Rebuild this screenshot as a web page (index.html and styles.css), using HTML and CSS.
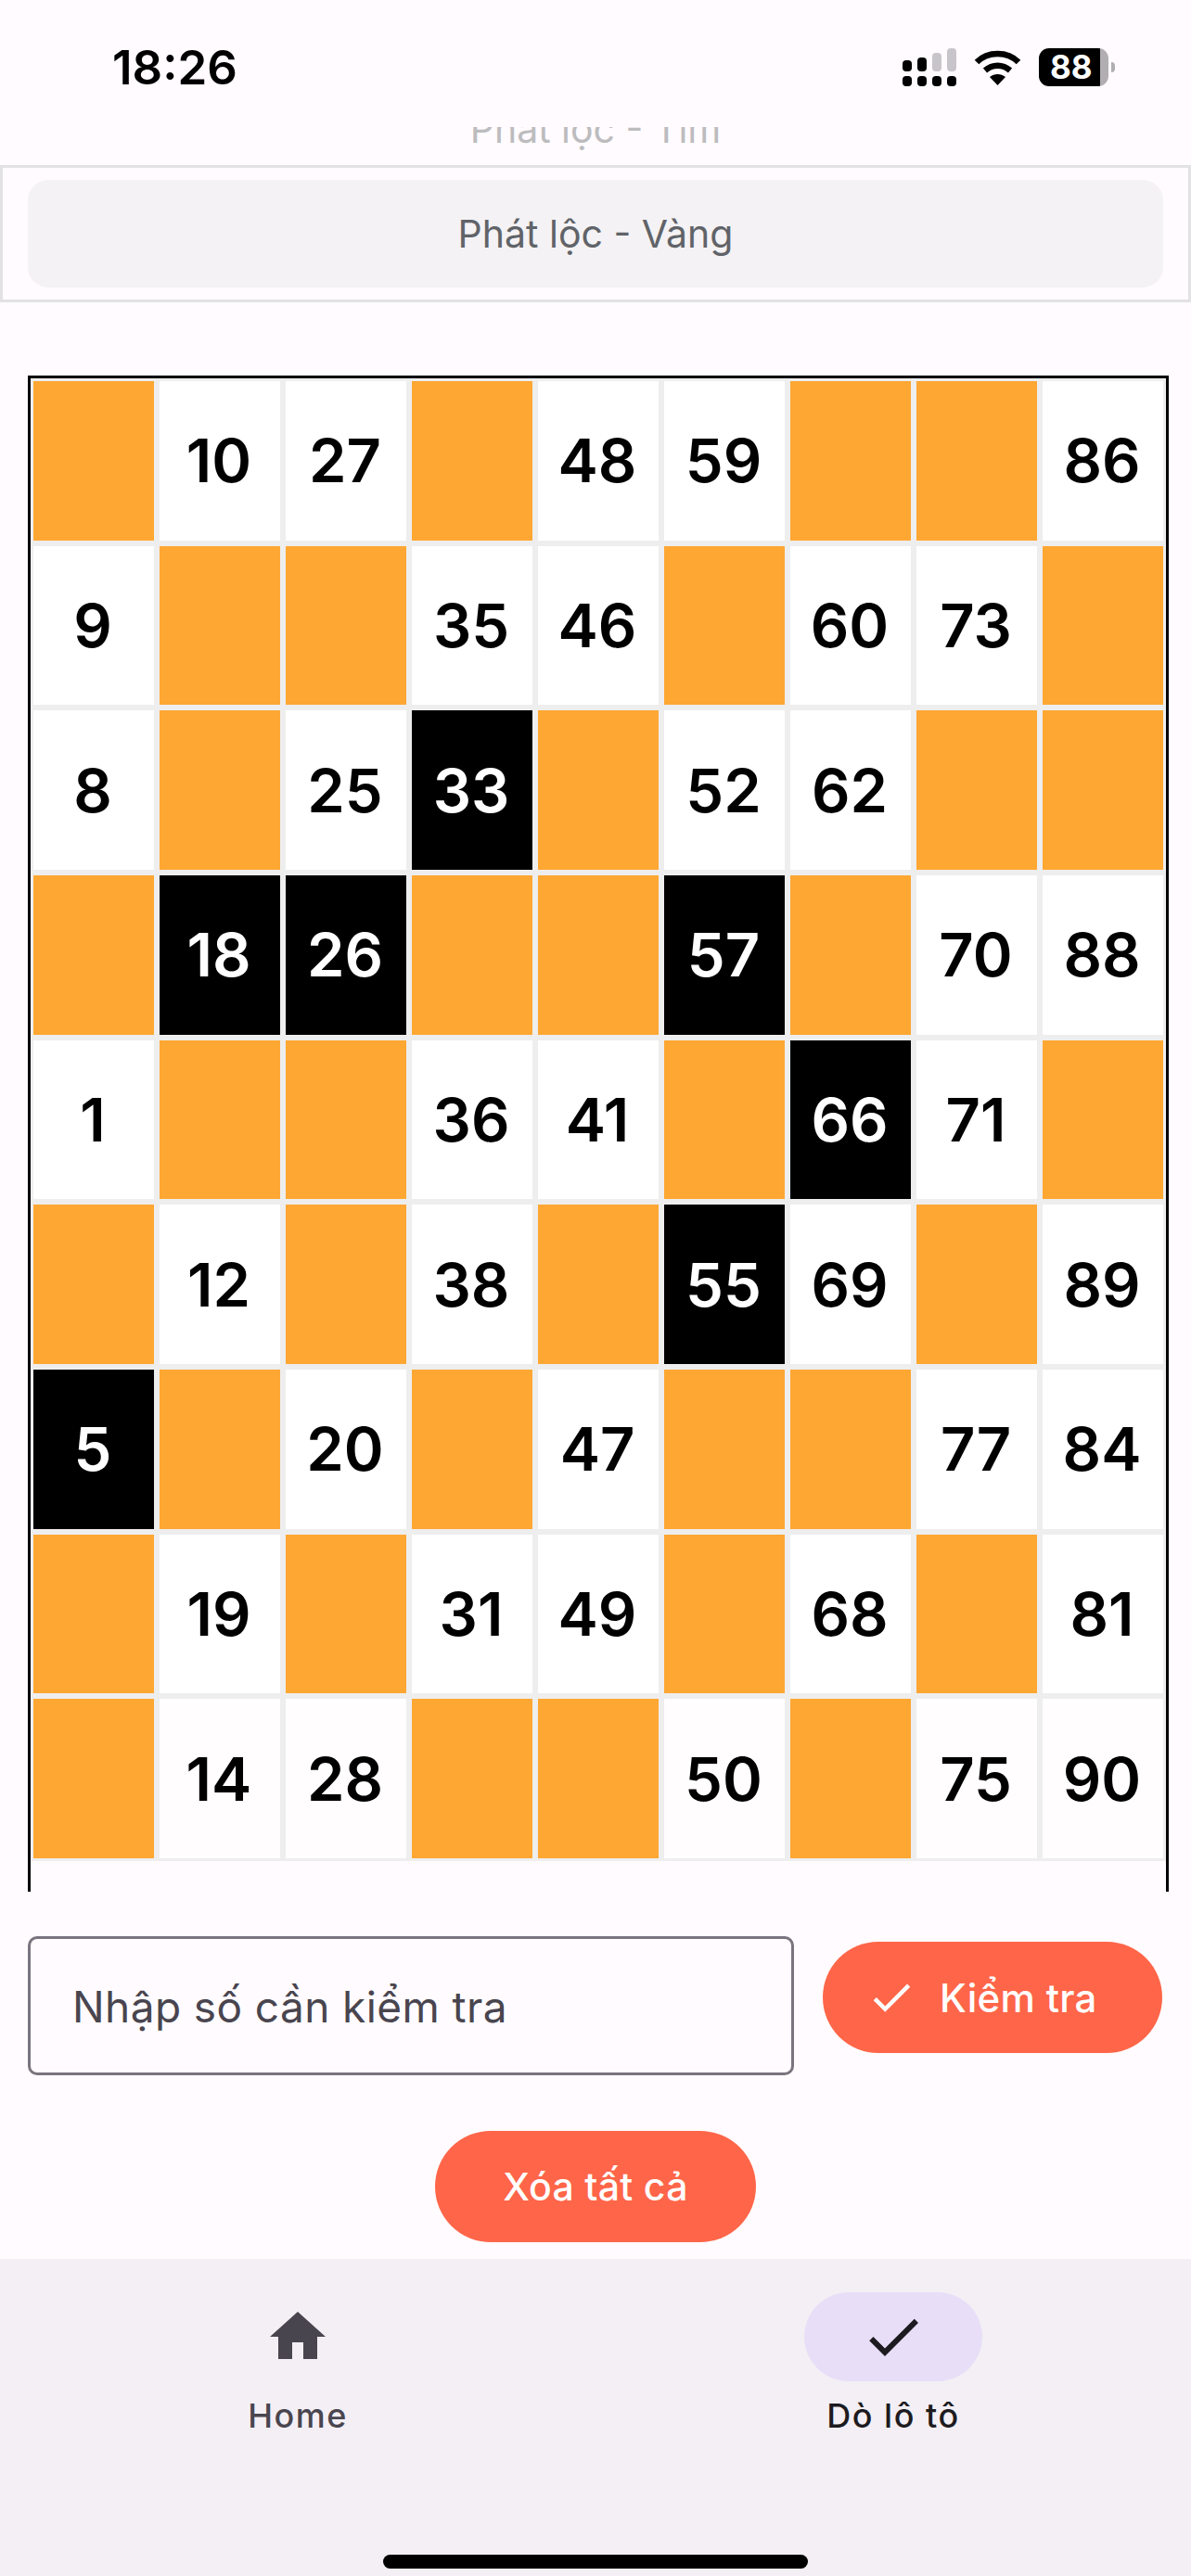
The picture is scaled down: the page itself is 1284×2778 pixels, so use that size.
FILE: index.html
```html
<!DOCTYPE html>
<html lang="en">

<head>
    <meta charset="UTF-8">
    <meta name="viewport" content="width=device-width, initial-scale=1.0">
    <title>Dò lô tô</title>
    <link rel="stylesheet" href="styles.css">
</head>

<body>
    <header class="status-bar">
        <span class="status-time">18:26</span>
        <div class="status-icons">
            <svg class="icon-signal" width="58" height="41" viewBox="0 0 58 41">
                <rect x="0" y="13" width="10" height="12" rx="4" fill="#000" />
                <rect x="16" y="10" width="10" height="15" rx="4" fill="#000" />
                <rect x="32" y="5" width="10" height="20" rx="4" fill="#c8c5ca" />
                <rect x="48" y="0" width="10" height="25" rx="4" fill="#c8c5ca" />
                <rect x="0" y="30" width="10" height="11" rx="4" fill="#000" />
                <rect x="16" y="30" width="10" height="11" rx="4" fill="#000" />
                <rect x="32" y="30" width="10" height="11" rx="4" fill="#000" />
                <rect x="48" y="30" width="10" height="11" rx="4" fill="#000" />
            </svg>
            <svg class="icon-wifi" width="51" height="38" viewBox="0 0 51 38">
                <path d="M3 13C15 1 36 1 48 13" fill="none" stroke="#000" stroke-width="6.5" />
                <path d="M12 22C20 15 31 15 39 22" fill="none" stroke="#000" stroke-width="6.5" />
                <path d="M25.5 38L17 29C22 25 29 25 34 29Z" fill="#000" />
            </svg>
            <div class="battery">
                <span class="battery-body">88</span>
                <span class="battery-tip"></span>
            </div>
        </div>
    </header>

    <div class="dropdown-peek"><span>Phát lộc - Tím</span></div>
    <div class="dropdown-item">
        <div class="dropdown-pill">Phát lộc - Vàng</div>
    </div>

    <div class="board">
        <div class="board-grid">
            <div class="cell on"></div><div class="cell">10</div><div class="cell">27</div><div class="cell on"></div><div class="cell">48</div><div class="cell">59</div><div class="cell on"></div><div class="cell on"></div><div class="cell">86</div>
            <div class="cell">9</div><div class="cell on"></div><div class="cell on"></div><div class="cell">35</div><div class="cell">46</div><div class="cell on"></div><div class="cell">60</div><div class="cell">73</div><div class="cell on"></div>
            <div class="cell">8</div><div class="cell on"></div><div class="cell">25</div><div class="cell hit">33</div><div class="cell on"></div><div class="cell">52</div><div class="cell">62</div><div class="cell on"></div><div class="cell on"></div>
            <div class="cell on"></div><div class="cell hit">18</div><div class="cell hit">26</div><div class="cell on"></div><div class="cell on"></div><div class="cell hit">57</div><div class="cell on"></div><div class="cell">70</div><div class="cell">88</div>
            <div class="cell">1</div><div class="cell on"></div><div class="cell on"></div><div class="cell">36</div><div class="cell">41</div><div class="cell on"></div><div class="cell hit">66</div><div class="cell">71</div><div class="cell on"></div>
            <div class="cell on"></div><div class="cell">12</div><div class="cell on"></div><div class="cell">38</div><div class="cell on"></div><div class="cell hit">55</div><div class="cell">69</div><div class="cell on"></div><div class="cell">89</div>
            <div class="cell hit">5</div><div class="cell on"></div><div class="cell">20</div><div class="cell on"></div><div class="cell">47</div><div class="cell on"></div><div class="cell on"></div><div class="cell">77</div><div class="cell">84</div>
            <div class="cell on"></div><div class="cell">19</div><div class="cell on"></div><div class="cell">31</div><div class="cell">49</div><div class="cell on"></div><div class="cell">68</div><div class="cell on"></div><div class="cell">81</div>
            <div class="cell on"></div><div class="cell">14</div><div class="cell">28</div><div class="cell on"></div><div class="cell on"></div><div class="cell">50</div><div class="cell on"></div><div class="cell">75</div><div class="cell">90</div>
        </div>
    </div>

    <form class="check-row">
        <input class="check-input" type="text" placeholder="Nhập số cần kiểm tra">
        <button class="btn btn-check" type="button">
            <svg width="54" height="54" viewBox="0 0 24 24"><path d="M9 16.17L4.83 12l-1.42 1.41L9 19 21 7l-1.41-1.41z" fill="#fff" /></svg>
            Kiểm tra
        </button>
    </form>

    <div class="clear-row">
        <button class="btn btn-clear" type="button">Xóa tất cả</button>
    </div>

    <nav class="bottom-nav">
        <div class="nav-items">
            <a class="nav-item">
                <span class="nav-pill">
                    <svg width="72" height="72" viewBox="0 0 24 24"><path d="M10 20v-6h4v6h5v-8h3L12 3 2 12h3v8z" fill="#49454f" /></svg>
                </span>
                <span class="nav-label">Home</span>
            </a>
            <a class="nav-item active">
                <span class="nav-pill">
                    <svg width="72" height="72" viewBox="0 0 24 24"><path d="M9 16.17L4.83 12l-1.42 1.41L9 19 21 7l-1.41-1.41z" fill="#1d1b20" /></svg>
                </span>
                <span class="nav-label">Dò lô tô</span>
            </a>
        </div>
        <div class="home-bar"></div>
    </nav>
</body>

</html>
```

FILE: styles.css
```css
body {
    font-family: Inter, "Noto Sans", sans-serif;
    background-color: #fffbfe;
    margin: 0;
    width: 1284px;
    height: 2778px;
    overflow: hidden;
    display: flex;
    flex-direction: column;
}

.status-bar {
    height: 137px;
    box-sizing: border-box;
    padding: 52px 82px 0 121px;
    display: flex;
    justify-content: space-between;
    align-items: flex-start;
}

.status-time {
    font-size: 51px;
    line-height: 41px;
    font-weight: 600;
    color: #000;
}

.status-icons {
    display: flex;
    align-items: center;
    height: 41px;
}

.icon-wifi {
    margin-left: 19px;
}

.battery {
    margin-left: 19px;
    display: flex;
    align-items: center;
    gap: 3px;
}

.battery-body {
    width: 75px;
    height: 41px;
    box-sizing: border-box;
    padding-left: 12px;
    border-radius: 11px;
    background: linear-gradient(to right, #000 66px, #b0aeb0 66px);
    color: #fff;
    font-size: 35px;
    line-height: 41px;
    font-weight: 700;
}

.battery-tip {
    width: 4px;
    height: 11px;
    border-radius: 0 4px 4px 0;
    background-color: #b0aeb0;
}

/* previous option, scrolled almost out of the list */
.dropdown-peek {
    height: 41px;
    overflow: hidden;
    display: flex;
    justify-content: center;
    align-items: flex-end;
    color: #bcbcbe;
    font-size: 41px;
    line-height: 41px;
}

.dropdown-peek span {
    margin-bottom: 18px;
}

.dropdown-item {
    height: 148px;
    box-sizing: border-box;
    border: 3px solid #e2e2e4;
    padding: 13px 27px;
}

.dropdown-pill {
    height: 116px;
    border-radius: 22px;
    background-color: #f4f2f4;
    color: #606368;
    font-size: 41px;
    display: flex;
    align-items: center;
    justify-content: center;
}

.board {
    width: 1230px;
    height: 1635px;
    box-sizing: border-box;
    margin: 79px 0 0 30px;
    border: 3px solid #000;
    border-bottom: none;
}

.board-grid {
    display: grid;
    grid-template-columns: repeat(9, 136px);
    grid-auto-rows: 177.67px;
}

.cell {
    border: 3px solid #eeeeee;
    padding-right: 2px;
    background-color: #fff;
    color: #000;
    font-size: 65px;
    font-weight: 600;
    display: flex;
    align-items: center;
    justify-content: center;
}

.cell:nth-last-child(-n+9) {
    background-color: #fffdfe;
}

.cell.on {
    background-color: #ffa733;
}

.cell.hit {
    background-color: #000;
    color: #fff;
}

.check-row {
    display: flex;
    align-items: flex-start;
    margin: 48px 0 0 30px;
}

.check-input {
    width: 826px;
    height: 150px;
    box-sizing: border-box;
    border: 3px solid #79747e;
    border-radius: 10px;
    padding: 2px 45px 0;
    background: transparent;
    font-family: Inter, "Noto Sans", sans-serif;
    font-size: 46px;
    letter-spacing: 0.4px;
    color: #49454f;
}

.check-input::placeholder {
    color: #49454f;
    opacity: 1;
}

.btn {
    height: 120px;
    border: none;
    border-radius: 60px;
    background-color: #ff6548;
    color: #fff;
    font-family: Inter, "Noto Sans", sans-serif;
    font-size: 42px;
    font-weight: 500;
    letter-spacing: 0.3px;
    cursor: pointer;
}

.btn-check {
    width: 366px;
    margin: 6px 0 0 31px;
    padding: 0 0 0 47px;
    display: flex;
    align-items: center;
    gap: 25px;
}

.clear-row {
    display: flex;
    justify-content: center;
    margin-top: 60px;
}

.btn-clear {
    width: 346px;
    padding: 0;
    font-size: 41px;
}

.bottom-nav {
    margin-top: 18px;
    height: 342px;
    background-color: #f3eff5;
}

.nav-items {
    display: flex;
    padding-top: 36px;
}

.nav-item {
    width: 642px;
    display: flex;
    flex-direction: column;
    align-items: center;
}

.nav-pill {
    width: 192px;
    height: 96px;
    border-radius: 48px;
    display: flex;
    align-items: center;
    justify-content: center;
}

.nav-item.active .nav-pill {
    background-color: #e8def8;
}

.nav-label {
    margin-top: 13px;
    font-size: 36px;
    line-height: 48px;
    font-weight: 500;
    letter-spacing: 1.5px;
    color: #49454f;
}

.nav-item.active .nav-label {
    color: #1d1b20;
}

.home-bar {
    width: 458px;
    height: 15px;
    margin: 126px auto 0;
    border-radius: 8px;
    background-color: #000;
}
```
